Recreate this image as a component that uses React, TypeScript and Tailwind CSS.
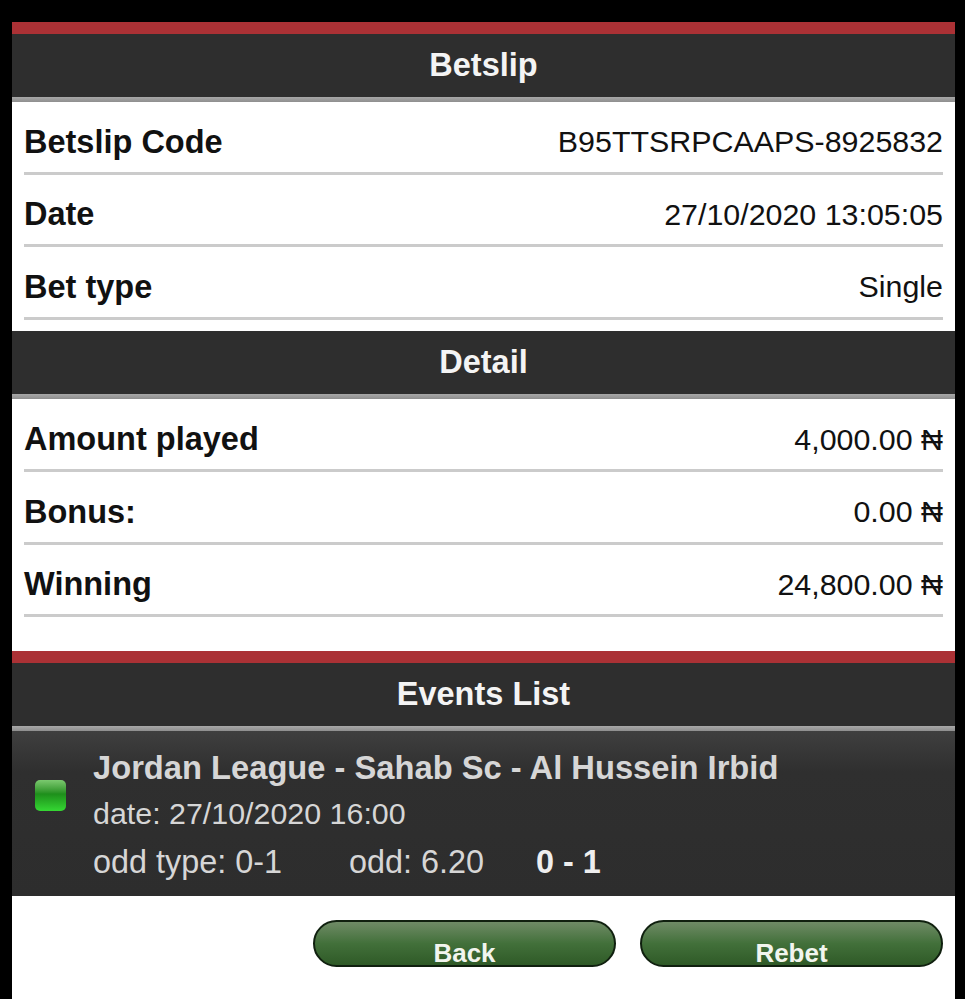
const font = "font-['Liberation_Sans',Arial,sans-serif]";

function Header({ title, red = false }: { title: string; red?: boolean }) {
  return (
    <div>
      {red && <div className="h-3 bg-[#ab3135]" />}
      <div className="flex h-[63px] items-center justify-center bg-[#2e2e2e] text-[32.5px] font-bold text-[#f4f4f4]">
        {title}
      </div>
      <div className="h-[5px] bg-gradient-to-b from-[#a8a8a8] to-[#8e8e8e]" />
    </div>
  );
}

function Row({ label, value }: { label: string; value: string }) {
  return (
    <div className="flex h-[72.5px] items-center justify-between border-b-[3px] border-[#cbcbcb] pt-[11px] text-[#111]">
      <span className="text-[32.5px] font-bold">{label}</span>
      <span className="text-[30.4px]">{value}</span>
    </div>
  );
}

function Button({ label }: { label: string }) {
  return (
    <div className="flex h-[47px] w-[303px] items-end justify-center rounded-[24px] border-2 border-[#10200f] bg-gradient-to-b from-[#6f8b66] via-[#42703a] to-[#2f5a27] text-[26px] font-bold leading-[30px] text-[#f2f5ee]">
      <span className="translate-y-[3px]">{label}</span>
    </div>
  );
}

export default function App() {
  return (
    <div className={`h-[999px] w-[965px] overflow-hidden bg-black pl-3 pr-[10px] pt-[22px] ${font}`}>
      <div className="h-[977px] bg-white">
        <Header title="Betslip" red />
        <div className="px-3">
          <Row label="Betslip Code" value="B95TTSRPCAAPS-8925832" />
          <Row label="Date" value="27/10/2020 13:05:05" />
          <Row label="Bet type" value="Single" />
        </div>
        <div className="mt-[11px]">
          <Header title="Detail" />
        </div>
        <div className="px-3 pt-px">
          <Row label="Amount played" value="4,000.00 ₦" />
          <Row label="Bonus:" value="0.00 ₦" />
          <Row label="Winning" value="24,800.00 ₦" />
        </div>
        <div className="mt-[34px]">
          <Header title="Events List" red />
        </div>
        <div className="flex h-[165px] items-start bg-gradient-to-b from-[#3f3f3f] via-[#2f2f2f] via-[25%] to-[#2d2d2d] pl-[23px] pt-[18px]">
          <div className="mt-[31px] h-[31px] w-[31px] rounded-[5px] bg-gradient-to-b from-[#7bc96f] via-[#1e8f1b] via-[45%] to-[#35d833]" />
          <div className="ml-[27px] text-[#d6d6d6]">
            <div className="text-[32.7px] font-bold leading-[38px]">Jordan League - Sahab Sc - Al Hussein Irbid</div>
            <div className="mt-[9px] text-[30.4px] leading-[35px]">date: 27/10/2020 16:00</div>
            <div className="mt-[14px] flex text-[32.4px] leading-[35px]">
              <span className="w-[256px]">odd type: 0-1</span>
              <span className="w-[187px]">odd: 6.20</span>
              <span className="font-bold text-[#eeeeee]">0 - 1</span>
            </div>
          </div>
        </div>
        <div className="flex justify-end gap-6 pr-3 pt-6">
          <Button label="Back" />
          <Button label="Rebet" />
        </div>
      </div>
    </div>
  );
}
